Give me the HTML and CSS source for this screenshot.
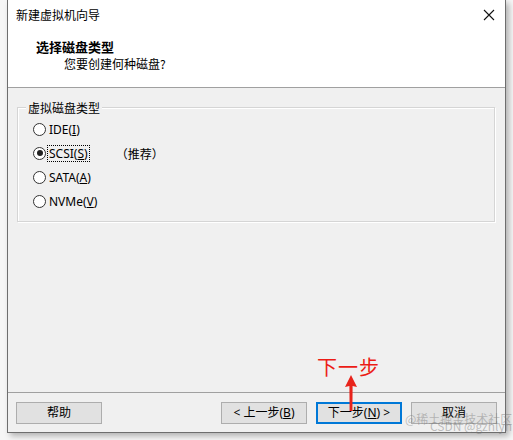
FILE: index.html
```html
<!DOCTYPE html>
<html lang="zh">
<head>
<meta charset="utf-8">
<title>新建虚拟机向导</title>
<link rel="stylesheet" href="styles.css">
</head>
<body>
<div class="window">
  <div class="titlebar">
    <span class="title">新建虚拟机向导</span>
    <svg class="close" width="12" height="12" viewBox="0 0 12 12"><path d="M1 1 L11 11 M11 1 L1 11" stroke="#111" stroke-width="1.1" fill="none"/></svg>
  </div>
  <div class="header">
    <div class="h-title">选择磁盘类型</div>
    <div class="h-sub">您要创建何种磁盘?</div>
  </div>
  <div class="sep"></div>
  <div class="content">
    <div class="group">
      <span class="legend">虚拟磁盘类型</span>
      <div class="row"><span class="radio"></span><span class="lbl">IDE(<u>I</u>)</span></div>
      <div class="row"><span class="radio checked"></span><span class="lbl focus">SCSI(<u>S</u>)</span><span class="rec">（推荐）</span></div>
      <div class="row"><span class="radio"></span><span class="lbl">SATA(<u>A</u>)</span></div>
      <div class="row"><span class="radio"></span><span class="lbl">NVMe(<u>V</u>)</span></div>
    </div>
  </div>
  <div class="sep"></div>
  <div class="footer">
    <button class="btn">帮助</button>
    <div class="spacer"></div>
    <button class="btn">&lt; 上一步(<u>B</u>)</button>
    <button class="btn default">下一步(<u>N</u>) &gt;</button>
    <button class="btn">取消</button>
  </div>
</div>
<div class="note">下一步</div>
<svg class="arrow" width="14" height="38" viewBox="0 0 14 38"><path d="M7 0 L13 12 L8.6 11 L8.4 36 L5.6 36 L5.4 11 L1 12 Z" fill="#e8231b"/></svg>
<div class="wm wm1">@稀土掘金技术社区</div>
<div class="wm wm2">CSDN @gzhlyh</div>
</body>
</html>
```

FILE: styles.css
```css
html, body {
  margin: 0;
  padding: 0;
}
body {
  width: 513px;
  height: 440px;
  background: #f6f6f6;
  font-family: "Noto Sans", "Noto Sans CJK SC", sans-serif;
  font-size: 12px;
  color: #000;
  position: relative;
  overflow: hidden;
}
.window {
  margin-left: 7px;
  width: 497px;
  height: 432px;
  border: 1px solid #6e6e6e;
  border-top: none;
  background: #f0f0f0;
  display: flex;
  flex-direction: column;
  box-shadow: 3px 3px 6px rgba(0,0,0,0.28);
}
.titlebar {
  height: 30px;
  background: #fff;
  display: flex;
  align-items: center;
  justify-content: space-between;
  padding: 0 10px 0 8px;
}
.title {
  font-family: "Noto Sans CJK SC", sans-serif;
  font-size: 12px;
  line-height: 16px;
}
.header {
  height: 57px;
  background: #fff;
  padding-left: 28px;
  box-sizing: border-box;
  padding-top: 9px;
}
.h-title {
  font-family: "Noto Sans CJK SC", sans-serif;
  font-weight: bold;
  font-size: 13px;
  line-height: 16px;
}
.h-sub {
  font-family: "Noto Sans CJK SC", sans-serif;
  font-size: 12px;
  line-height: 17px;
  padding-left: 28px;
}
.sep {
  height: 1px;
  background: #a0a0a0;
}
.content {
  height: 304px;
  padding: 19px 10px 0 9px;
  box-sizing: border-box;
}
.group {
  position: relative;
  height: 115px;
  box-sizing: border-box;
  border: 1px solid #d5d5d5;
  box-shadow: inset 1px 1px 0 #fff, 1px 1px 0 #fff;
  padding: 9px 0 0 15px;
}
.legend {
  position: absolute;
  top: -9px;
  left: 8px;
  padding: 0 2px;
  background: #f0f0f0;
  font-family: "Noto Sans CJK SC", sans-serif;
  line-height: 17px;
}
.row {
  height: 24px;
  display: flex;
  align-items: center;
}
.radio {
  width: 11px;
  height: 11px;
  border: 1px solid #333;
  border-radius: 50%;
  background: #fff;
  position: relative;
  flex: none;
}
.radio.checked::after {
  content: "";
  position: absolute;
  left: 2.5px;
  top: 2.5px;
  width: 6px;
  height: 6px;
  border-radius: 50%;
  background: #222;
}
.lbl {
  margin-left: 2px;
  padding: 0 1px;
  line-height: 15px;
  outline: 1px solid transparent;
}
.lbl.focus {
  outline: 1px dotted #000;
  outline-offset: 0;
}
.rec {
  margin-left: 27px;
  font-family: "Noto Sans CJK SC", sans-serif;
}
.footer {
  flex: 1;
  display: flex;
  align-items: flex-start;
  padding: 9px 8px 0 8px;
  gap: 9px;
}
.spacer {
  flex: 1;
}
.btn {
  width: 86px;
  height: 22px;
  box-sizing: border-box;
  background: #e1e1e1;
  border: 1px solid #adadad;
  font-family: "Noto Sans", "Noto Sans CJK SC", sans-serif;
  font-size: 12px;
  color: #000;
  padding: 0;
  line-height: 18px;
}
.btn.default {
  border: 2px solid #0078d7;
}
.note {
  position: absolute;
  left: 317px;
  top: 354px;
  color: #ec1c16;
  font-family: "Noto Sans CJK SC", sans-serif;
  font-size: 20px;
  line-height: 26px;
  letter-spacing: 1px;
}
.arrow {
  position: absolute;
  left: 344px;
  top: 375px;
}
.wm {
  position: absolute;
  color: rgba(120,120,120,0.45);
  font-family: "Noto Sans CJK SC", sans-serif;
  font-size: 12px;
  line-height: 14px;
  white-space: nowrap;
}
.wm1 {
  left: 405px;
  top: 412px;
}
.wm2 {
  left: 430px;
  top: 419px;
}
```
